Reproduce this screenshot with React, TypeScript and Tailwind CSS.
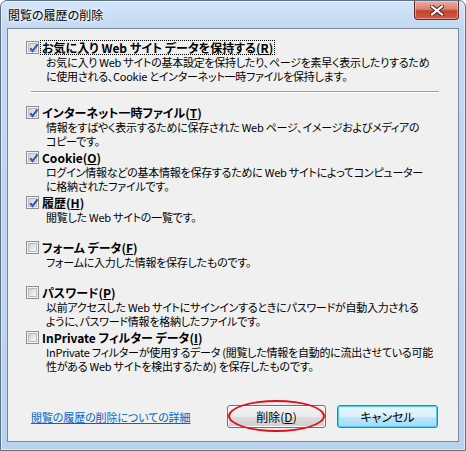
import React from "react";

const JP = "font-['Noto_Sans_CJK_JP','Noto_Sans',sans-serif] [font-feature-settings:'palt']";

function Check({ checked }: { checked: boolean }) {
  return (
    <span className="relative flex h-[13px] w-[13px] shrink-0 items-center justify-center border border-[#8e8f8f] bg-[#f4f4f4]">
      <span className="h-[9px] w-[9px] border border-[#b9bdc2] bg-[linear-gradient(135deg,#c9ccd1_0%,#e4e6e9_50%,#f8f8f8_100%)]" />
      {checked && (
        <svg className="absolute left-[1px] top-[0px]" width="12" height="12" viewBox="0 0 12 12">
          <path d="M2.2 6.2 L4.6 9 L9.6 2.4" fill="none" stroke="#3a5bb0" strokeWidth="2.2" strokeLinejoin="miter" />
        </svg>
      )}
    </span>
  );
}

function Item({
  checked,
  label,
  lines,
  focus,
}: {
  checked: boolean;
  label: React.ReactNode;
  lines: string[];
  focus?: boolean;
}) {
  return (
    <div className="flex flex-col">
      <div className="flex h-[15px] items-center gap-[2px]">
        <Check checked={checked} />
        <span
          className={
            "px-[1px] text-[12px] font-bold leading-[13px] text-black " +
            (focus ? "outline outline-1 outline-dotted outline-black" : "")
          }
        >
          {label}
        </span>
      </div>
      <div className="ml-[20px] min-h-[28px] whitespace-nowrap text-[11px] leading-[14px] tracking-[-0.25px] text-black">
        {lines.map((l, i) => (
          <div key={i}>{l}</div>
        ))}
      </div>
    </div>
  );
}

function Btn({ children, focused }: { children: React.ReactNode; focused?: boolean }) {
  return (
    <div
      className={
        "flex h-[23px] items-center justify-center rounded-[3px] border text-[12px] text-black " +
        (focused
          ? "w-[101px] border-[#3c7fb1] bg-[linear-gradient(180deg,#eaf6fd_0%,#d9f0fc_50%,#bee6fd_51%,#a7d9f5_100%)] shadow-[inset_0_0_0_1px_#48d0f3]"
          : "w-[99px] border-[#707070] bg-[linear-gradient(180deg,#f2f2f2_0%,#ebebeb_50%,#dddddd_51%,#cfcfcf_100%)] shadow-[inset_0_0_0_1px_#fcfcfc]")
      }
    >
      {children}
    </div>
  );
}

export default function App() {
  return (
    <div className={"w-[466px] h-[451px] bg-white " + JP}>
      <div className="flex h-[451px] w-[466px] flex-col rounded-t-[7px] border border-[#5d6f86] bg-[linear-gradient(180deg,#d3e5f9_0%,#c2d9f3_6%,#b9d2ef_100%)] shadow-[inset_0_0_0_1px_rgba(255,255,255,0.55)]">
        <div className="flex h-[27px] shrink-0 items-start">
          <span className="ml-[7px] mt-[7px] text-[12px] leading-[14px] text-black [text-shadow:0_0_6px_#ffffff,0_0_3px_#ffffff]">
            閲覧の履歴の削除
          </span>
          <div className="ml-auto mr-[6px] flex h-[19px] w-[45px] items-center justify-center rounded-b-[4px] border border-t-0 border-[#6e2a20] bg-[linear-gradient(180deg,#eab0a5_0%,#dc8170_45%,#c7432d_55%,#cf5a43_100%)] shadow-[inset_0_0_0_1px_rgba(255,210,200,0.5)]">
            <svg width="14" height="11" viewBox="0 0 14 11">
              <path d="M2 1.5 L12 9.5 M12 1.5 L2 9.5" stroke="#4a1a14" strokeWidth="4" strokeLinecap="square" />
              <path d="M2 1.5 L12 9.5 M12 1.5 L2 9.5" stroke="#ffffff" strokeWidth="2.2" strokeLinecap="square" />
            </svg>
          </div>
        </div>
        <div className="mx-[6px] mb-[8px] flex flex-1 flex-col border border-[#7a8797] bg-[#f0f0f0]">
          <div className="relative flex flex-1 flex-col pl-[18px] pt-[11px]">
            <Item
              checked
              focus
              label={
                <>
                  お気に入り Web サイト データを保持する(<u>R</u>)
                </>
              }
              lines={[
                "お気に入り Web サイトの基本設定を保持したり、ページを素早く表示したりするため",
                "に使用される、Cookie とインターネット一時ファイルを保持します。",
              ]}
            />
            <div className="ml-[5px] mr-[19px] mt-[8px] mb-[12px] h-[2px] border-t border-[#a0a0a0] border-b border-b-white" />
            <div className="flex flex-col gap-[2px]">
              <Item
                checked
                label={
                  <>
                    インターネット一時ファイル(<u>T</u>)
                  </>
                }
                lines={[
                  "情報をすばやく表示するために保存された Web ページ、イメージおよびメディアの",
                  "コピーです。",
                ]}
              />
              <Item
                checked
                label={
                  <>
                    Cookie(<u>O</u>)
                  </>
                }
                lines={[
                  "ログイン情報などの基本情報を保存するために Web サイトによってコンピューター",
                  "に格納されたファイルです。",
                ]}
              />
              <Item
                checked
                label={
                  <>
                    履歴(<u>H</u>)
                  </>
                }
                lines={["閲覧した Web サイトの一覧です。"]}
              />
              <Item
                checked={false}
                label={
                  <>
                    フォーム データ(<u>F</u>)
                  </>
                }
                lines={["フォームに入力した情報を保存したものです。"]}
              />
              <Item
                checked={false}
                label={
                  <>
                    パスワード(<u>P</u>)
                  </>
                }
                lines={[
                  "以前アクセスした Web サイトにサインインするときにパスワードが自動入力される",
                  "ように、パスワード情報を格納したファイルです。",
                ]}
              />
              <Item
                checked={false}
                label={
                  <>
                    InPrivate フィルター データ(<u>I</u>)
                  </>
                }
                lines={[
                  "InPrivate フィルターが使用するデータ (閲覧した情報を自動的に流出させている可能",
                  "性がある Web サイトを検出するため) を保存したものです。",
                ]}
              />
            </div>
            <div className="mt-auto mb-[13px] flex items-center pr-[20px]">
              <span className="ml-[5px] text-[11px] leading-[14px] tracking-[-0.1px] text-[#0066cc] underline">
                閲覧の履歴の削除についての詳細
              </span>
              <div className="ml-auto flex gap-[11px]">
                <div className="relative">
                  <Btn>
                    削除(<u>D</u>)
                  </Btn>
                  <div className="absolute left-[1px] top-[-5px] h-[32px] w-[97px] rounded-[50%] border-2 border-[#e0101a]" />
                </div>
                <Btn focused>キャンセル</Btn>
              </div>
            </div>
          </div>
        </div>
      </div>
    </div>
  );
}
